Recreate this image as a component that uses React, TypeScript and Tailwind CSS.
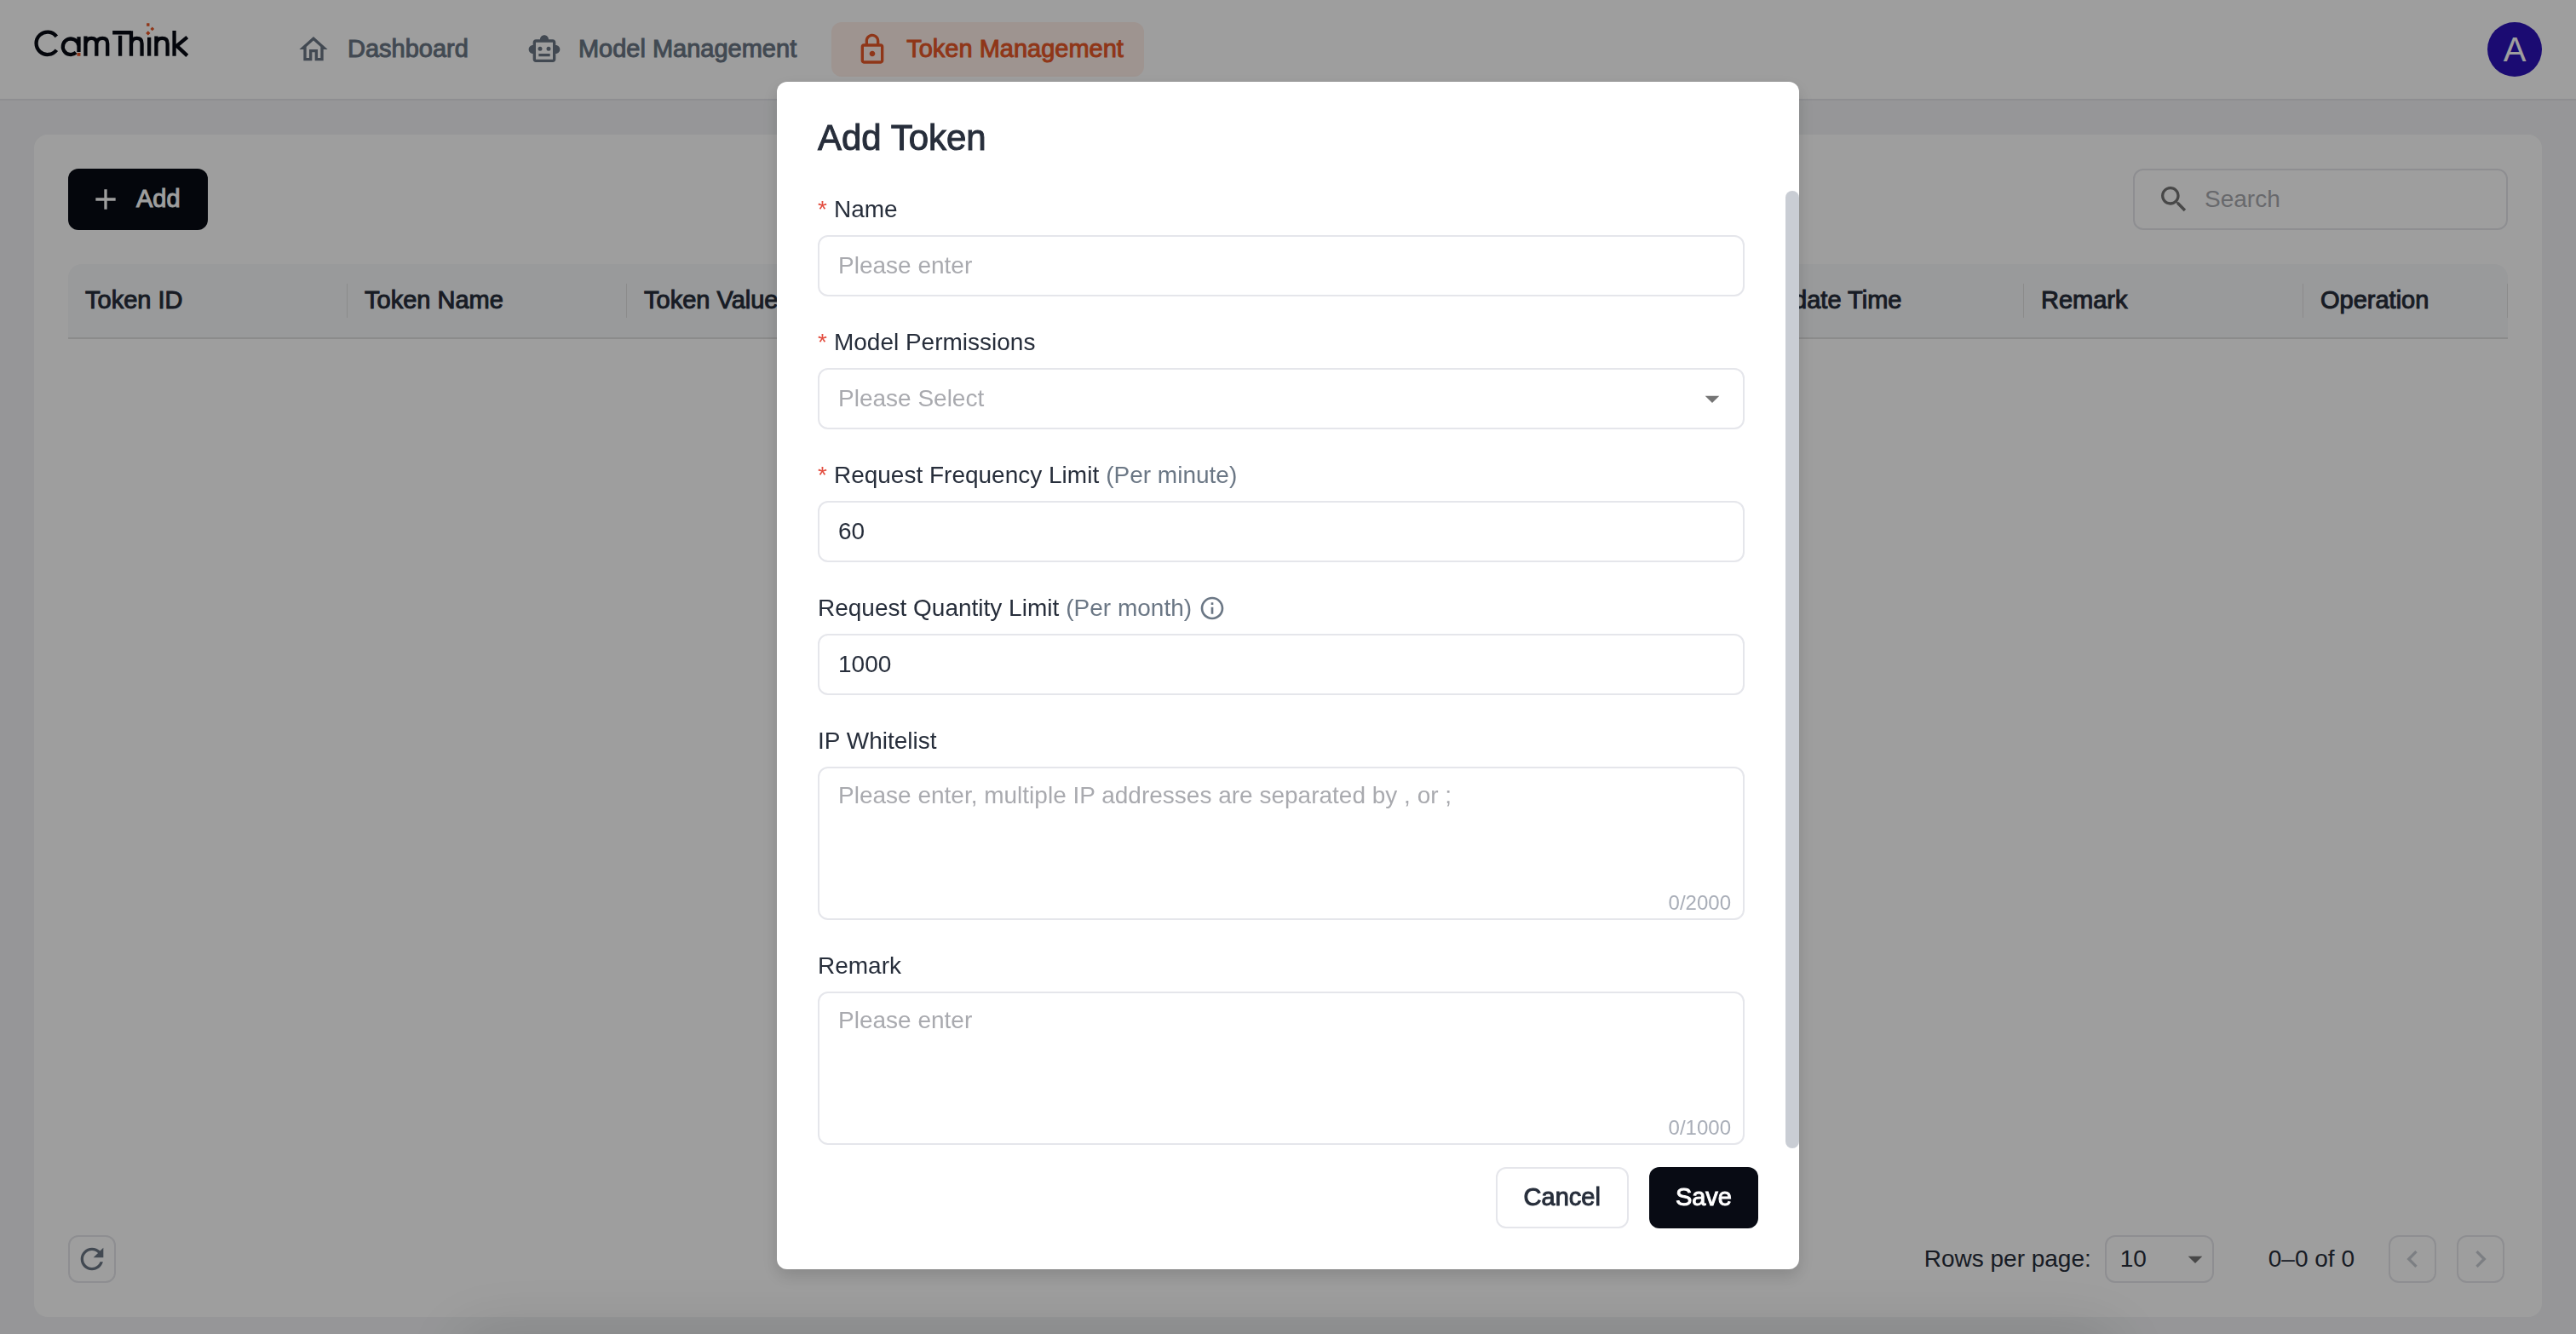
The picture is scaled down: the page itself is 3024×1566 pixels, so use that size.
import React, { useState } from "react";

const MEDIUM = "text-[29px] font-medium [-webkit-text-stroke:1px_currentColor]";
const CONTROL =
  "h-[72px] w-full rounded-xl border-2 border-[#e5e6eb] bg-white px-[22px] text-[28px] text-[#272e3b] outline-none placeholder:text-[#a9aaaf]";

function Icon({ d, className = "size-10" }: { d: string; className?: string }) {
  return (
    <svg viewBox="0 0 24 24" fill="currentColor" aria-hidden="true" className={`shrink-0 ${className}`}>
      <path d={d} />
    </svg>
  );
}

const paths = {
  home: "M12 5.69l5 4.5V18h-2v-6H9v6H7v-7.81l5-4.5M12 3L2 12h3v8h6v-6h2v6h6v-8h3L12 3z",
  robot:
    "M20 9V7c0-1.1-.9-2-2-2h-3c0-1.66-1.34-3-3-3S9 3.34 9 5H6c-1.1 0-2 .9-2 2v2c-1.66 0-3 1.34-3 3s1.34 3 3 3v4c0 1.1.9 2 2 2h12c1.1 0 2-.9 2-2v-4c1.66 0 3-1.34 3-3s-1.34-3-3-3m-2 10H6V7h12zM9 10a1.5 1.5 0 1 0 0 3 1.5 1.5 0 0 0 0-3m6 0a1.5 1.5 0 1 0 0 3 1.5 1.5 0 0 0 0-3M8 15h8v2H8z",
  lock: "M18 8h-1V6c0-2.76-2.24-5-5-5S7 3.24 7 6v2H6c-1.1 0-2 .9-2 2v10c0 1.1.9 2 2 2h12c1.1 0 2-.9 2-2V10c0-1.1-.9-2-2-2M9 6c0-1.66 1.34-3 3-3s3 1.34 3 3v2H9zm9 14H6V10h12zm-6-3c1.1 0 2-.9 2-2s-.9-2-2-2-2 .9-2 2 .9 2 2 2",
  add: "M19 13h-6v6h-2v-6H5v-2h6V5h2v6h6z",
  search:
    "M15.5 14h-.79l-.28-.27C15.41 12.59 16 11.11 16 9.5 16 5.91 13.09 3 9.5 3S3 5.91 3 9.5 5.91 16 9.5 16c1.61 0 3.09-.59 4.23-1.57l.27.28v.79l5 4.99L20.49 19zm-6 0C7.01 14 5 11.99 5 9.5S7.01 5 9.5 5 14 7.01 14 9.5 11.99 14 9.5 14",
  refresh:
    "M17.65 6.35C16.2 4.9 14.21 4 12 4c-4.42 0-7.99 3.58-7.99 8s3.57 8 7.99 8c3.73 0 6.84-2.55 7.73-6h-2.08c-.82 2.33-3.04 4-5.65 4-3.31 0-6-2.69-6-6s2.69-6 6-6c1.66 0 3.14.69 4.22 1.78L13 11h7V4z",
  dropDown: "m7 10 5 5 5-5z",
  left: "M15.41 7.41 14 6l-6 6 6 6 1.41-1.41L10.83 12z",
  right: "M10 6 8.59 7.41 13.17 12l-4.58 4.59L10 18l6-6z",
  info: "M11 7h2v2h-2zm0 4h2v6h-2zm1-9C6.48 2 2 6.48 2 12s4.48 10 10 10 10-4.48 10-10S17.52 2 12 2m0 18c-4.41 0-8-3.59-8-8s3.59-8 8-8 8 3.59 8 8-3.59 8-8 8",
};

function Logo() {
  return (
    <svg viewBox="30 30 548 124" role="img" aria-label="CamThink" className="h-[41px] w-[183px]">
      <g fill="none" stroke="#080b14" strokeWidth="13">
        <path d="M107 81A40 40 0 1 0 107 129" />
        <path d="M176 138A28 28 0 1 1 185 112" />
        <path d="M186 82V136" />
        <path d="M210 80V150M211 104Q214 87 231 87Q249 87 249 106V150M249 106Q252 87 270 87Q288 87 288 106V150" />
        <path d="M306 67H372M333 78V150" />
        <path d="M372 61V150M372 106Q375 87 392 87Q410 87 410 106V150" />
        <path d="M436 84V150" />
        <path d="M461 80V150M461 106Q464 87 482 87Q501 87 501 106V150" />
        <path d="M525 60V150M571 83L534 114L571 149" />
      </g>
      <g fill="#e75728">
        <path d="M180 139H192V150H180zM432 61L440 69L432 77L424 69zM447 47L454 54L447 61L440 54zM427 34H437V44H427z" />
      </g>
    </svg>
  );
}

const navItems = [
  { label: "Dashboard", icon: paths.home, active: false },
  { label: "Model Management", icon: paths.robot, active: false },
  { label: "Token Management", icon: paths.lock, active: true },
];

const columns = ["Token ID", "Token Name", "Token Value", "", "", "", "Update Time", "Remark", "Operation"];

function Header() {
  return (
    <header className="flex h-[118px] items-start justify-between border-b-2 border-[#e5e6eb] bg-white px-10 pt-[26px]">
      <div className="flex items-start">
        <Logo />
        <nav className="ml-[97px] flex gap-[17px]">
          {navItems.map((item) => (
            <a
              key={item.label}
              href="#"
              aria-current={item.active ? "page" : undefined}
              className={`flex h-16 items-center gap-5 rounded-xl pr-6 pl-7 whitespace-nowrap ${MEDIUM} ${
                item.active ? "bg-[#ffefe8] text-[#e75728]" : "text-[#6b7785]"
              }`}
            >
              <Icon d={item.icon} />
              {item.label}
            </a>
          ))}
        </nav>
      </div>
      <button type="button" aria-label="Account" className="size-16 rounded-full bg-[#2c13b9] text-[40px] leading-none text-white">
        A
      </button>
    </header>
  );
}

function TokenPage() {
  return (
    <section className="flex flex-1 flex-col rounded-2xl bg-white p-10">
      <div className="flex items-center justify-between">
        <button type="button" className={`flex h-[72px] items-center gap-4 rounded-xl bg-[#080b14] pr-8 pl-6 text-white ${MEDIUM}`}>
          <Icon d={paths.add} />
          Add
        </button>
        <label className="flex h-[72px] w-[440px] items-center gap-4 rounded-xl border-2 border-[#e5e6eb] px-[26px] text-black/54">
          <Icon d={paths.search} />
          <input
            type="search"
            aria-label="Search"
            placeholder="Search"
            className="w-full min-w-0 bg-transparent text-[28px] text-[#272e3b] outline-none placeholder:text-[#a9aaaf]"
          />
        </label>
      </div>

      <div className="mt-10 overflow-hidden rounded-t-2xl">
        <table className="w-full table-fixed border-collapse bg-[#f7f8fa]">
          <colgroup>
            {columns.map((_, i) => (
              <col key={i} className={i === columns.length - 1 ? "w-[240px]" : ""} />
            ))}
          </colgroup>
          <thead>
            <tr className="border-b-2 border-[#e0e0e0]">
              {columns.map((name, i) => (
                <th key={i} scope="col" className="p-0 text-left">
                  <div className={`my-[23px] flex h-10 items-center border-r border-[#e0e0e0] pl-5 whitespace-nowrap text-[#272e3b] ${MEDIUM}`}>
                    {name}
                  </div>
                </th>
              ))}
            </tr>
          </thead>
        </table>
      </div>

      <div className="mt-auto flex items-center justify-between pr-1 text-[28px] text-[#272e3b]">
        <button type="button" aria-label="Refresh" className="flex size-14 items-center justify-center rounded-xl border-2 border-[#e5e6eb] text-[#6b7785]">
          <Icon d={paths.refresh} />
        </button>
        <div className="flex items-center">
          <label htmlFor="rows">Rows per page:</label>
          <div className="relative ml-4 w-32">
            <select
              id="rows"
              defaultValue="10"
              className="h-14 w-full appearance-none rounded-xl border-2 border-[#e5e6eb] bg-white pl-4 outline-none"
            >
              <option>10</option>
              <option>20</option>
            </select>
            <Icon d={paths.dropDown} className="pointer-events-none absolute top-2 right-0.5 size-10 text-black/54" />
          </div>
          <span className="ml-16">0–0 of 0</span>
          <button type="button" disabled aria-label="Previous page" className="ml-10 flex size-14 items-center justify-center rounded-xl border-2 border-[#e5e6eb] text-[#c9cdd4]">
            <Icon d={paths.left} />
          </button>
          <button type="button" disabled aria-label="Next page" className="ml-6 flex size-14 items-center justify-center rounded-xl border-2 border-[#e5e6eb] text-[#c9cdd4]">
            <Icon d={paths.right} />
          </button>
        </div>
      </div>
    </section>
  );
}

type FieldProps = {
  id: string;
  label: string;
  hint?: string;
  required?: boolean;
  info?: boolean;
  children: React.ReactNode;
};

function Field({ id, label, hint, required, info, children }: FieldProps) {
  return (
    <div className="flex flex-col gap-2">
      <div className="flex h-11 items-center gap-2">
        <label htmlFor={id} className="flex items-center gap-2">
          {required && <span className="text-[28px] leading-none text-[#e34d3f]">*</span>}
          <span>{label}</span>
          {hint && <span className="text-[#6b7785]">{hint}</span>}
        </label>
        {info && (
          <button type="button" aria-label="More information" className="text-[#6b7785]">
            <Icon d={paths.info} className="size-8" />
          </button>
        )}
      </div>
      {children}
    </div>
  );
}

function LimitedTextarea({ id, placeholder, max }: { id: string; placeholder: string; max: number }) {
  const [value, setValue] = useState("");
  return (
    <div className="relative flex">
      <textarea
        id={id}
        value={value}
        maxLength={max}
        onChange={(e) => setValue(e.target.value)}
        placeholder={placeholder}
        className="h-[180px] w-full resize-none rounded-xl border-2 border-[#e5e6eb] bg-white px-[22px] py-3 leading-10 outline-none placeholder:text-[#a9aaaf]"
      />
      <span className="absolute right-4 bottom-1 text-[24px] leading-8 text-[#a9aeb8]">
        {value.length}/{max}
      </span>
    </div>
  );
}

function AddTokenDialog() {
  return (
    <div className="fixed inset-0 flex items-start justify-center bg-black/38 pt-24">
      <div
        role="dialog"
        aria-modal="true"
        aria-labelledby="dialog-title"
        className="relative z-10 flex w-[1200px] flex-col rounded-xl bg-white text-[28px] text-[#272e3b] shadow-[0_8px_20px_rgba(0,0,0,0.15)]"
      >
        <h2 id="dialog-title" className="px-12 pt-9 pb-8 text-[42px] leading-[60px] font-medium [-webkit-text-stroke:1px_currentColor]">
          Add Token
        </h2>
        <form className="flex flex-col">
          <div className="flex">
            <div className="flex flex-1 flex-col gap-8 px-12 pb-1">
              <Field id="name" label="Name" required>
                <input id="name" type="text" placeholder="Please enter" className={CONTROL} />
              </Field>
              <Field id="models" label="Model Permissions" required>
                <div className="relative">
                  <select id="models" defaultValue="" className={`${CONTROL} appearance-none text-[#a9aaaf]!`}>
                    <option value="" disabled>
                      Please Select
                    </option>
                  </select>
                  <Icon d={paths.dropDown} className="pointer-events-none absolute top-4 right-[18px] size-10 text-black/54" />
                </div>
              </Field>
              <Field id="frequency" label="Request Frequency Limit" hint="(Per minute)" required>
                <input id="frequency" type="text" inputMode="numeric" defaultValue="60" className={CONTROL} />
              </Field>
              <Field id="quantity" label="Request Quantity Limit" hint="(Per month)" info>
                <input id="quantity" type="text" inputMode="numeric" defaultValue="1000" className={CONTROL} />
              </Field>
              <Field id="whitelist" label="IP Whitelist">
                <LimitedTextarea id="whitelist" placeholder="Please enter, multiple IP addresses are separated by , or ;" max={2000} />
              </Field>
              <Field id="remark" label="Remark">
                <LimitedTextarea id="remark" placeholder="Please enter" max={1000} />
              </Field>
            </div>
            {/* Scroll thumb */}
            <div className="w-4 rounded-full bg-[#c9cdd4]" />
          </div>
          <div className="flex justify-end gap-6 px-12 pt-[22px] pb-12">
            <button type="button" className={`h-[72px] rounded-xl border-2 border-[#e5e6eb] bg-white px-[31px] ${MEDIUM}`}>
              Cancel
            </button>
            <button type="submit" className={`h-[72px] rounded-xl bg-[#080b14] px-[31px] text-white ${MEDIUM}`}>
              Save
            </button>
          </div>
        </form>
      </div>
      {/* Soft shade rising from the bottom edge */}
      <div className="absolute inset-x-[540px] top-full h-20 shadow-[0_0_80px_rgba(0,0,0,0.15)]" />
    </div>
  );
}

export default function App() {
  return (
    <div className="flex min-h-screen flex-col overflow-hidden bg-[#f2f3f5] font-['Liberation_Sans',Arial,sans-serif]">
      <Header />
      <main className="flex flex-1 flex-col px-10 pt-10 pb-5">
        <TokenPage />
      </main>
      <AddTokenDialog />
    </div>
  );
}
